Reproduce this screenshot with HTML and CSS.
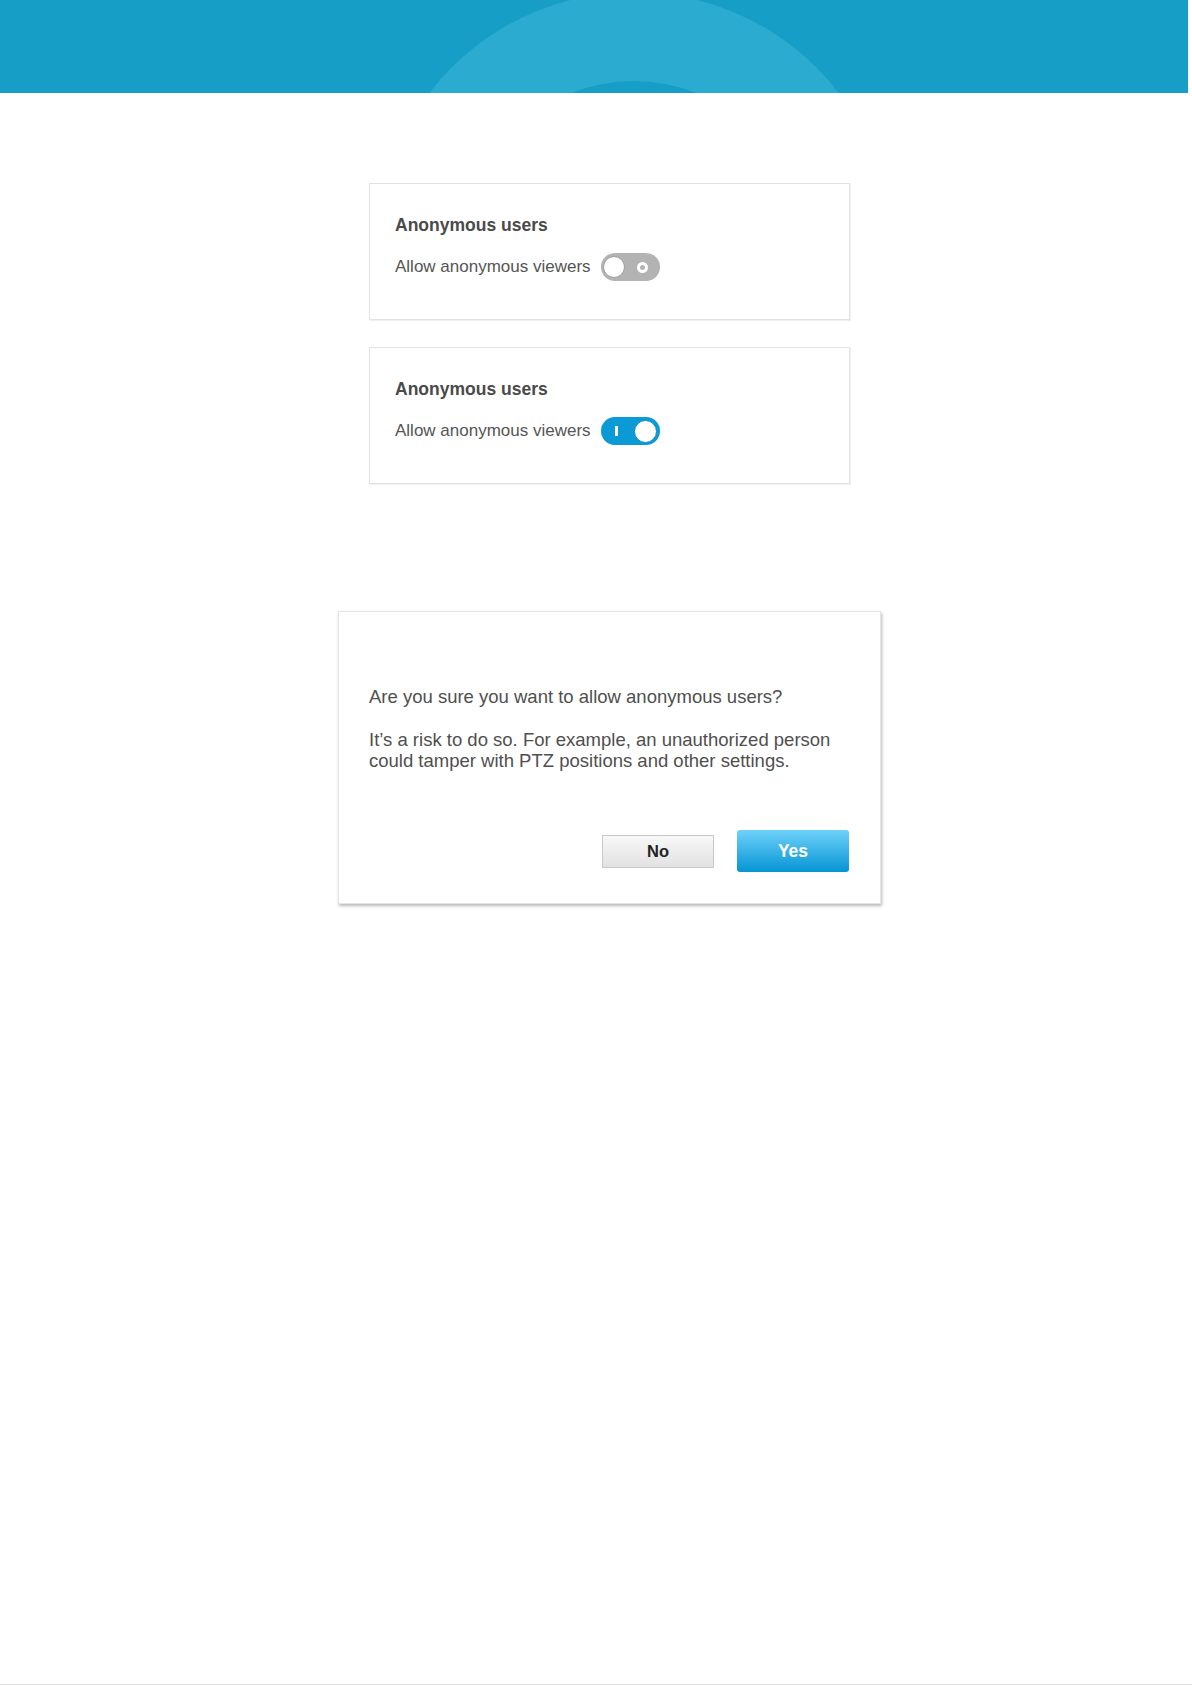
FILE: index.html
```html
<!DOCTYPE html>
<html lang="en">
<head>
    <meta charset="UTF-8">
    <meta name="viewport" content="width=device-width, initial-scale=1.0">
    <title>Anonymous users</title>

    <link rel="stylesheet" href="styles.css">
</head>
<body>
    <div class="page">
        <div class="banner">
            <svg class="banner-art" width="1188" height="93" viewBox="0 0 1188 93">
                <circle cx="634" cy="250" r="258" fill="#2cabd0"/>
                <circle cx="634" cy="250" r="169" fill="#169ec6"/>
            </svg>
        </div>

        <div class="content">
            <!-- switched off -->
            <div class="card">
                <h2 class="card-title">Anonymous users</h2>
                <div class="setting-row">
                    <span class="setting-label">Allow anonymous viewers</span>
                    <span class="toggle toggle-off">
                        <span class="toggle-knob"></span>
                        <span class="toggle-ring"></span>
                    </span>
                </div>
            </div>

            <!-- switched on -->
            <div class="card">
                <h2 class="card-title">Anonymous users</h2>
                <div class="setting-row">
                    <span class="setting-label">Allow anonymous viewers</span>
                    <span class="toggle toggle-on">
                        <span class="toggle-bar"></span>
                        <span class="toggle-knob"></span>
                    </span>
                </div>
            </div>

            <div class="dialog">
                <p>Are you sure you want to allow anonymous users?</p>
                <p>It’s a risk to do so. For example, an unauthorized person could tamper with PTZ positions and other settings.</p>
                <div class="dialog-buttons">
                    <button class="btn btn-no">No</button>
                    <button class="btn btn-yes">Yes</button>
                </div>
            </div>
        </div>
    </div>
</body>
</html>
```

FILE: styles.css
```css
body {
    margin: 0;
    font-family: "Liberation Sans", Arial, sans-serif;
    background: #fff;
}
.page {
    min-height: 1685px;
    box-sizing: border-box;
    border-bottom: 1px solid #e0e0e0;
}
.banner {
    width: 1188px;
    height: 93px;
    background: #169ec6;
    overflow: hidden;
}
.banner-art {
    display: block;
}
.content {
    display: flex;
    flex-direction: column;
    align-items: center;
    padding: 90px 0 0 27px;
}
.card {
    width: 481px;
    box-sizing: border-box;
    border: 1px solid #e3e3e3;
    box-shadow: 1px 1px 1px rgba(0, 0, 0, 0.06);
    padding: 31px 25px 38px;
    background: #fff;
}
.card + .card {
    margin-top: 27px;
}
.card-title {
    margin: 0 0 18px;
    font-size: 17.5px;
    line-height: 20px;
    font-weight: bold;
    color: #4a4a4a;
}
.setting-row {
    display: flex;
    align-items: center;
    gap: 10px;
    height: 28px;
}
.setting-label {
    font-size: 17px;
    line-height: 20px;
    color: #555;
}
.toggle {
    width: 59px;
    height: 28px;
    box-sizing: border-box;
    border-radius: 14px;
    display: flex;
    align-items: center;
    justify-content: space-between;
}
.toggle-knob {
    border-radius: 50%;
    background: #fff;
    box-sizing: border-box;
}
.toggle-off {
    background: #b3b3b3;
    padding: 0 12px 0 2px;
}
.toggle-off .toggle-knob {
    width: 22px;
    height: 22px;
    border: 1px solid #9e9e9e;
}
.toggle-ring {
    width: 11px;
    height: 11px;
    box-sizing: border-box;
    border-radius: 50%;
    border: 3px solid #fff;
}
.toggle-on {
    background: #0b9ad6;
    padding: 0 3px 0 14px;
}
.toggle-bar {
    width: 3px;
    height: 10px;
    background: #fff;
}
.toggle-on .toggle-knob {
    width: 23px;
    height: 23px;
    border: 1px solid #0a8bc3;
}
.dialog {
    margin-top: 127px;
    width: 543px;
    box-sizing: border-box;
    border: 1px solid #e4e4e4;
    box-shadow: 1px 2px 3px rgba(0, 0, 0, 0.28);
    padding: 74px 31px 31px 30px;
    background: #fff;
}
.dialog p {
    margin: 0;
    font-size: 18.5px;
    line-height: 21px;
    color: #4f4f4f;
}
.dialog p + p {
    margin-top: 22px;
}
.dialog-buttons {
    display: flex;
    justify-content: flex-end;
    align-items: center;
    gap: 23px;
    margin-top: 59px;
}
.btn {
    width: 112px;
    box-sizing: border-box;
    font-family: inherit;
    font-weight: bold;
    cursor: pointer;
}
.btn-no {
    height: 33px;
    border: 1px solid #c8c8c8;
    border-radius: 0;
    background: linear-gradient(#f8f8f8, #e2e2e2);
    color: #222;
    font-size: 16.5px;
}
.btn-yes {
    height: 42px;
    border: 0;
    border-radius: 3px;
    background: linear-gradient(#6fd2fa, #0594d4);
    color: #fff;
    font-size: 17.5px;
}
```
